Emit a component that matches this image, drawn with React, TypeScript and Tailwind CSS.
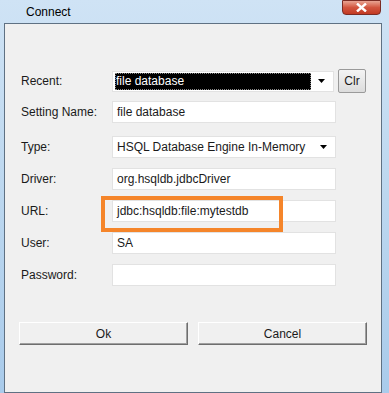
const font = { fontFamily: '"Liberation Sans", Arial, sans-serif' };

function Arrow() {
    return (
        <svg width="8" height="5" viewBox="0 0 8 5" className="shrink-0">
            <path d="M0 0 H7 L3.5 4 Z" fill="#000"/>
        </svg>
    );
}

function Field({label, value, combo, selected, mt}: {label: string; value: string; combo?: boolean; selected?: boolean; mt: string}) {
    return (
        <div className={`flex items-center h-[22px] ${mt}`}>
            <span className="w-[91px] pl-[16px] box-content text-[12px] text-[#1a1a1a]">{label}</span>
            <div className="w-[224px] h-[22px] bg-white border border-[#e2e2e2] flex items-center pl-[2px] pr-[4px]">
                <span
                    className={
                        selected
                            ? "flex-1 h-[18px] bg-black text-white text-[12px] leading-[18px] pl-[1px] outline outline-1 outline-dotted outline-white -outline-offset-1"
                            : "flex-1 text-[12px] text-[#1a1a1a] pl-[2px]"
                    }
                >
                    {value}
                </span>
                {combo && (
                    <span className="w-[14px] flex justify-center ml-[4px]">
                        <Arrow/>
                    </span>
                )}
            </div>
        </div>
    );
}

export default function App() {
    return (
        <div
            className="w-[389px] h-[393px] flex flex-col bg-gradient-to-b from-[#cfe3f5] via-[#bcd7ef] to-[#a9cbeb] overflow-hidden"
            style={font}
        >
            {/* title bar */}
            <div className="h-[23px] flex items-start shrink-0 relative">
                <span className="ml-[26px] mt-[3px] text-[12px] text-black">Connect</span>
                <div className="absolute right-[8px] top-0 w-[39px] h-[15px] rounded-b-[4px] border border-[#7b2c24] bg-gradient-to-b from-[#e8a493] via-[#d2553f] to-[#c23a22] flex items-center justify-center">
                    <svg width="11" height="9" viewBox="0 0 11 9">
                        <path d="M1 0.5 L10 8.5 M10 0.5 L1 8.5" stroke="#fff" strokeWidth="2.4"/>
                    </svg>
                </div>
            </div>

            {/* content */}
            <div className="flex-1 ml-[4px] mr-[7px] border border-[#5f7183] bg-[#f0f0f0] relative">
                <div className="flex items-center h-[22px] mt-[46px]">
                    <span className="w-[91px] pl-[16px] box-content text-[12px] text-[#1a1a1a]">Recent:</span>
                    <div className="w-[222px] h-[21px] bg-white border border-[#e2e2e2] flex items-center pl-[2px] pr-[4px]">
                        <span className="flex-1 h-[17px] bg-black text-white text-[12px] leading-[17px] pl-[1px] outline outline-1 outline-dotted outline-[#888] -outline-offset-1">
                            file database
                        </span>
                        <span className="w-[14px] flex justify-center ml-[4px]">
                            <Arrow/>
                        </span>
                    </div>
                    <button className="ml-[4px] w-[28px] h-[24px] text-[12px] text-[#1a1a1a] border border-[#9a9a9a] rounded-[2px] bg-gradient-to-b from-[#f4f4f4] to-[#dcdcdc]">
                        Clr
                    </button>
                </div>
                <Field label="Setting Name:" value="file database" mt="mt-[9px]"/>
                <Field label="Type:" value="HSQL Database Engine In-Memory" combo mt="mt-[13px]"/>
                <Field label="Driver:" value="org.hsqldb.jdbcDriver" mt="mt-[10px]"/>
                <Field label="URL:" value="jdbc:hsqldb:file:mytestdb" mt="mt-[10px]"/>
                <Field label="User:" value="SA" mt="mt-[10px]"/>
                <Field label="Password:" value="" mt="mt-[10px]"/>

                <div className="flex gap-[10px] pl-[14px] mt-[36px]">
                    <button className="w-[169px] h-[23px] text-[12px] text-[#1a1a1a] bg-[#f0f0f0] border border-t-white border-l-white border-b-[#6e6e6e] border-r-[#6e6e6e] shadow-[inset_-1px_-1px_0_#a0a0a0]">
                        Ok
                    </button>
                    <button className="w-[169px] h-[23px] text-[12px] text-[#1a1a1a] bg-[#f0f0f0] border border-t-white border-l-white border-b-[#6e6e6e] border-r-[#6e6e6e] shadow-[inset_-1px_-1px_0_#a0a0a0]">
                        Cancel
                    </button>
                </div>

                {/* highlight around URL */}
                <div className="absolute left-[96px] top-[172px] w-[182px] h-[36px] border-[4px] border-[#f5852a]"/>
            </div>
        </div>
    );
}
